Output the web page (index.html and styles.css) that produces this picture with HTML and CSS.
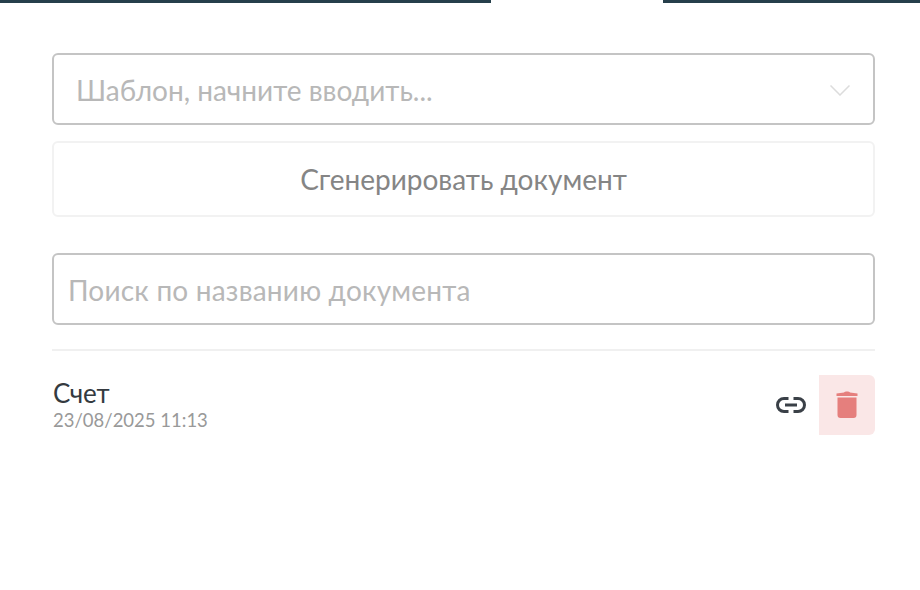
FILE: index.html
```html
<!DOCTYPE html>
<html>
<head>
    <title>Документы</title>
    <link rel="stylesheet" href="styles.css">
</head>

<body>
    <div class="tabs">
        <div class="tab"></div>
        <div class="tab-active"></div>
        <div class="tab"></div>
    </div>

    <div class="content">
        <div class="select">
            <span class="select-text">Шаблон, начните вводить...</span>
            <svg class="select-arrow" width="20" height="11" viewBox="0 0 20 11">
                <path d="M.5.5l9.500 9.500L19.500.5" fill="none" stroke="#dcdcdc" stroke-width="1.5"/>
            </svg>
        </div>
        <button type="button" class="generate-button">Сгенерировать документ</button>
        <input type="text" class="search" placeholder="Поиск по названию документа">

        <div class="doc">
            <div class="doc-info">
                <div class="doc-name">Счет</div>
                <div class="doc-date">23/08/2025 11:13</div>
            </div>
            <div class="doc-actions">
                <svg class="link-icon" width="32" height="16" viewBox="0 0 32 16">
                    <path d="M13.500 1.500H9a6.500 6.500 0 0 0 0 13h4.500M18.500 1.500H23a6.500 6.500 0 0 1 0 13h-4.500M10 8h12" fill="none" stroke="#3a4047" stroke-width="3"/>
                </svg>
                <div class="delete-button">
                    <svg width="22" height="28" viewBox="0 0 22 28">
                        <path d="M8 1.500C8.500.6 9.500.5 11 .5s2.500.1 3 1l7.500 1V5H.5V2.500zM1.500 6.500h19V24a3 3 0 0 1-3 3h-13a3 3 0 0 1-3-3z" fill="#e57f7d"/>
                    </svg>
                </div>
            </div>
        </div>
    </div>
</body>
</html>
```

FILE: styles.css
```css
* {
    box-sizing: border-box;
    margin: 0;
    padding: 0;
    font-family: "Lato", "Open Sans", sans-serif;
}

body {
    background: #ffffff;
}

.tabs {
    display: flex;
    height: 3px;
}
.tab {
    flex: 1;
    background: #263f4b;
}
.tab:last-child {
    flex: none;
    width: 257px;
}
.tab-active {
    width: 172px;
}

.content {
    display: flex;
    flex-direction: column;
    padding: 50px 45px 0 52px;
}

.select {
    display: flex;
    align-items: center;
    justify-content: space-between;
    height: 72px;
    padding: 2px 23px 0 22px;
    border: 2px solid #c4c4c4;
    border-radius: 6px;
}
.select-text {
    font-size: 28px;
    color: #b8b8b8;
}

.generate-button {
    height: 76px;
    margin-top: 16px;
    font-size: 28px;
    color: #858585;
    background: #ffffff;
    border: 2px solid #f2f2f2;
    border-radius: 6px;
}

.search {
    height: 72px;
    margin-top: 36px;
    padding: 2px 14px 0;
    font-size: 28px;
    letter-spacing: 0.2px;
    border: 2px solid #c4c4c4;
    border-radius: 6px;
    outline: none;
}
.search::placeholder {
    color: #b8b8b8;
    opacity: 1;
}

.doc {
    display: flex;
    align-items: center;
    justify-content: space-between;
    margin-top: 24px;
    padding-top: 24px;
    border-top: 2px solid #f0f0f0;
}
.doc-name {
    padding-left: 1px;
    font-size: 26px;
    line-height: 30px;
    color: #343a40;
}
.doc-date {
    padding-left: 1px;
    font-size: 18.5px;
    line-height: 24px;
    color: #999999;
}

.doc-actions {
    display: flex;
    align-items: center;
}
.link-icon {
    margin-right: 12px;
}
.delete-button {
    display: flex;
    align-items: center;
    justify-content: center;
    width: 56px;
    height: 60px;
    background: #fae7e7;
    border-radius: 0 6px 6px 0;
}
```
